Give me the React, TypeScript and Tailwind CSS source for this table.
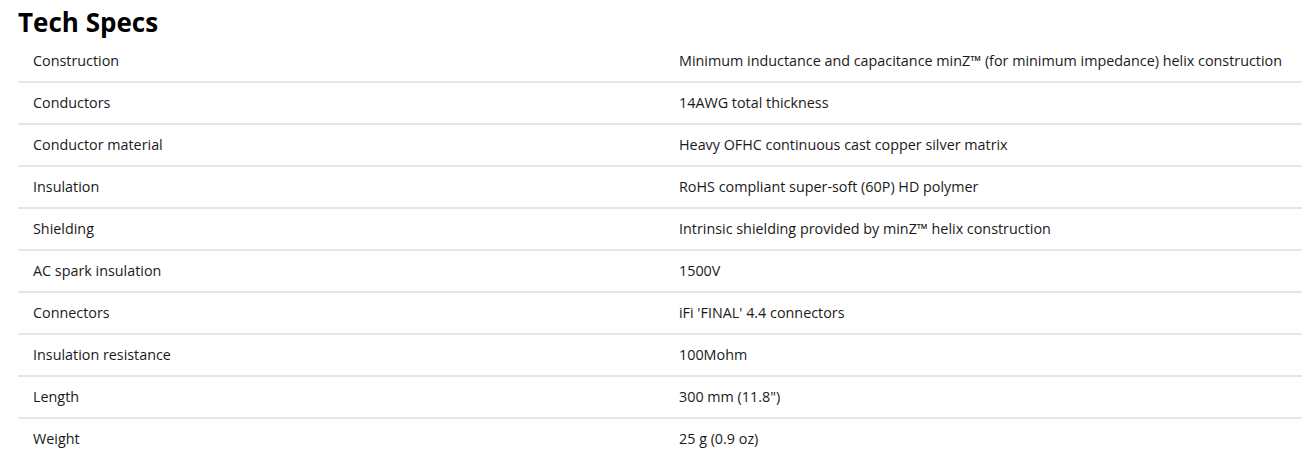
const SPECS: [string, string][] = [
  ["Construction", "Minimum inductance and capacitance minZ™ (for minimum impedance) helix construction"],
  ["Conductors", "14AWG total thickness"],
  ["Conductor material", "Heavy OFHC continuous cast copper silver matrix"],
  ["Insulation", "RoHS compliant super-soft (60P) HD polymer"],
  ["Shielding", "Intrinsic shielding provided by minZ™ helix construction"],
  ["AC spark insulation", "1500V"],
  ["Connectors", "iFi 'FINAL' 4.4 connectors"],
  ["Insulation resistance", "100Mohm"],
  ["Length", "300 mm (11.8\")"],
  ["Weight", "25 g (0.9 oz)"],
];

export default function App() {
  return (
    <div className="bg-white pl-[18px] font-['Open_Sans',sans-serif] text-[#1a1a1a]">
      <h2 className="pt-[5px] text-[26px] font-bold leading-[34px] text-black">Tech Specs</h2>
      <div className="flex flex-col">
        {SPECS.map(([label, value], i) => (
          <div
            key={label}
            className={
              i > 0
                ? "flex h-[42px] items-center border-t-2 border-[#e6e6e6] text-[14.35px]"
                : "flex h-[42px] items-center pt-[2px] text-[14.35px]"
            }
          >
            <div className="w-[646px] shrink-0 pl-[15px]">{label}</div>
            <div className="pl-[15px]">{value}</div>
          </div>
        ))}
      </div>
    </div>
  );
}
